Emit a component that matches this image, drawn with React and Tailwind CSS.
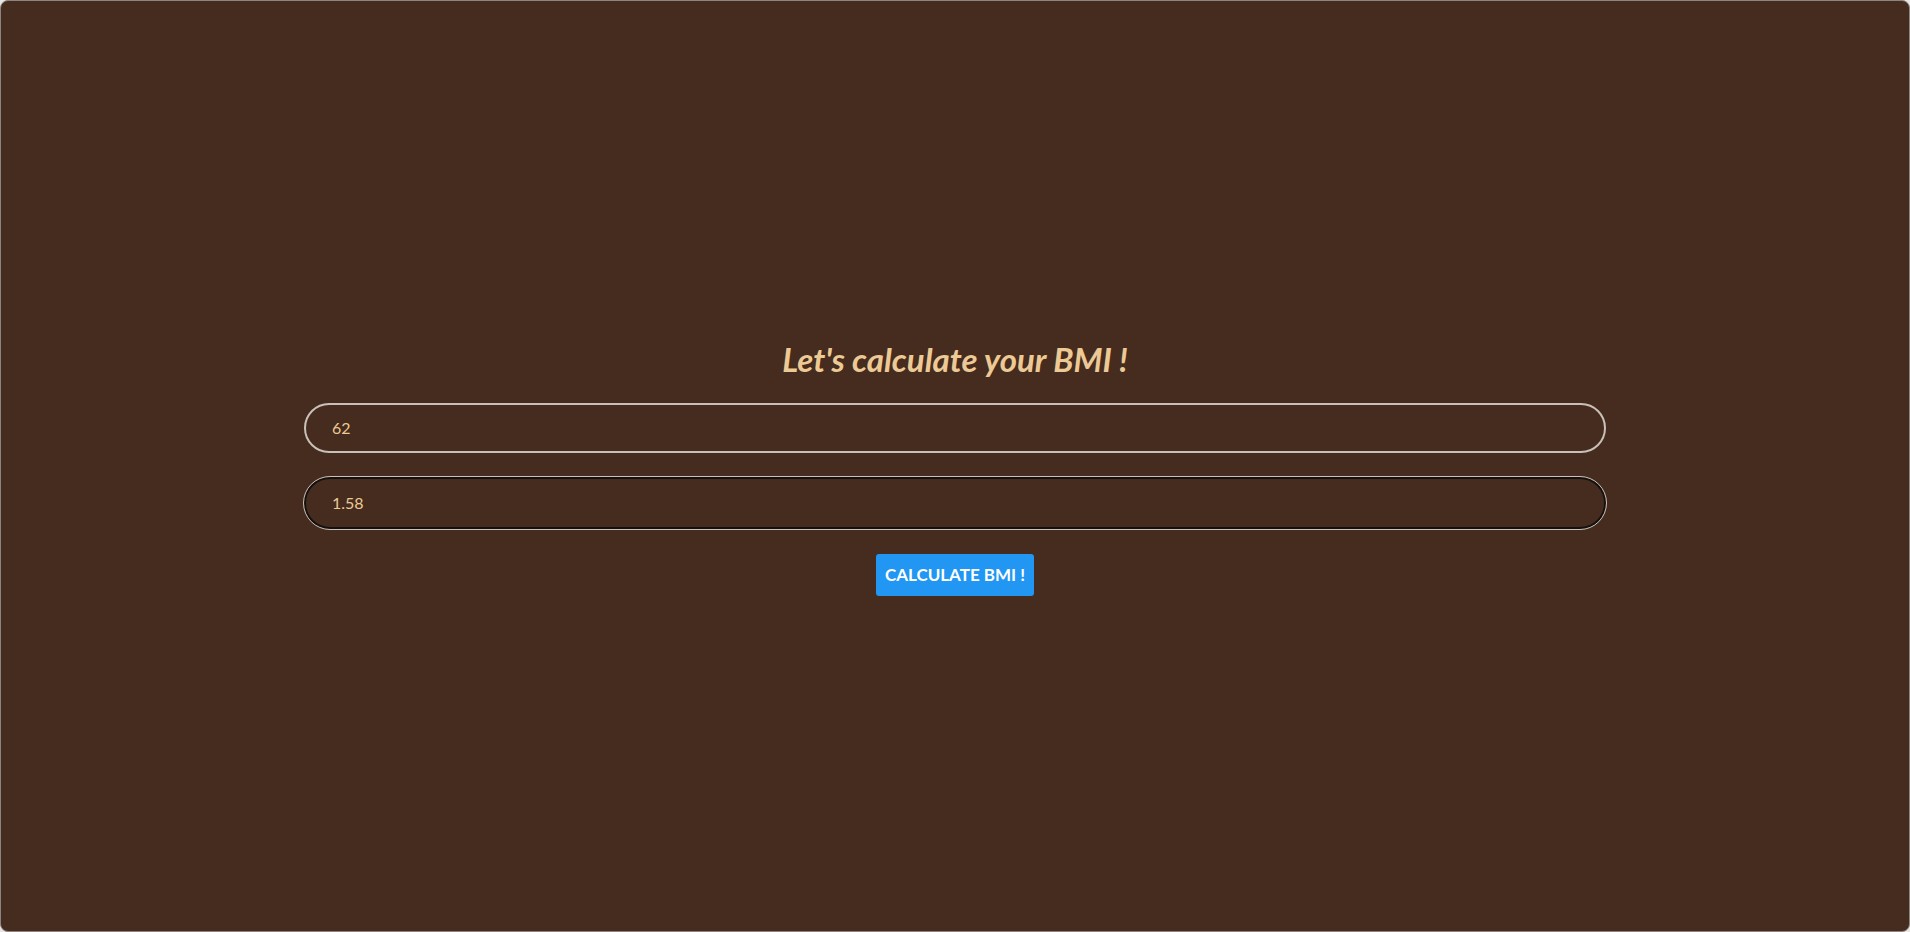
export default function App() {
  return (
    <div className="h-screen w-full bg-[#e8e6e4] p-0">
      <div
        className="flex h-full w-full flex-col items-center justify-center rounded-lg border border-[#8a8580] bg-[#452c1e] pt-[2px]"
        style={{ fontFamily: "Lato, 'Open Sans', sans-serif" }}
      >
        <h1 className="mb-[24px] text-[33px] font-bold italic leading-[40px] text-[#ecc995]">
          Let's calculate your BMI !
        </h1>
        <form className="flex w-[1302px] flex-col items-center" onSubmit={(e) => e.preventDefault()}>
          <input
            type="text"
            defaultValue="62"
            className="h-[50px] w-full rounded-full border-2 border-[#c9c1b9] bg-transparent px-[26px] text-[16px] text-[#ecc995] outline-none"
          />
          <input
            type="text"
            defaultValue="1.58"
            className="mt-[24px] h-[52px] w-full rounded-full border-2 border-[#141110] bg-transparent px-[26px] text-[16px] text-[#ecc995] outline outline-1 outline-[#c9c1b9] caret-[#ecc995]"
          />
          <button
            type="submit"
            className="mt-[25px] h-[42px] w-[158px] rounded-[3px] bg-[#2196f3] text-[17px] font-bold text-white"
          >
            CALCULATE BMI !
          </button>
        </form>
      </div>
    </div>
  );
}
